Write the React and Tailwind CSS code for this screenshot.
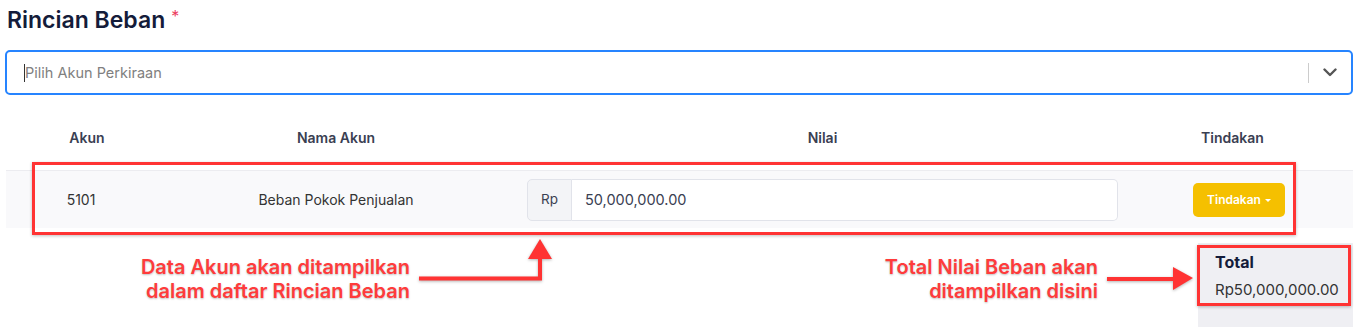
import React from "react";

const ChevronDown = () => (
  <svg width="14" height="9" viewBox="0 0 14 9" fill="none">
    <path d="M1.5 1.5 L7 7 L12.5 1.5" stroke="#555" strokeWidth="2.4" strokeLinecap="round" strokeLinejoin="round" />
  </svg>
);

const App = () => {
  return (
    <div className="relative h-[327px] w-[1359px] overflow-hidden bg-white font-['Inter','Noto_Sans',sans-serif]">
      <div className="pl-[7px] pt-[6px]">
        <h2 className="flex items-start text-[23px] font-semibold leading-[28px] text-[#141c3a]">
          Rincian Beban
          <span className="ml-[6px] mt-[-4px] text-[16px] font-normal text-[#ec3d5f]">*</span>
        </h2>
      </div>

      <div className="ml-[5px] mr-[6px] mt-[16px] flex h-[45px] items-center rounded-[5px] border-2 border-[#2684ff] bg-white">
        <div className="flex flex-1 items-center pl-[17px]">
          <span className="h-[18px] w-px bg-[#333]" />
          <span className="text-[14.5px] text-[#808080]">Pilih Akun Perkiraan</span>
        </div>
        <span className="h-[20px] w-px bg-[#ccc]" />
        <div className="flex w-[42px] items-center justify-center">
          <ChevronDown />
        </div>
      </div>

      <div className="ml-[6px] mr-[6px] mt-[10px]">
        <div className="grid h-[65px] grid-cols-[156px_348px_625px_1fr] items-center text-[14px] font-semibold text-[#3a4052]">
          <div className="text-center pl-[6px]">Akun</div>
          <div className="text-center">Nama Akun</div>
          <div className="text-center">Nilai</div>
          <div className="pl-[66px]">Tindakan</div>
        </div>
        <div className="grid h-[58px] grid-cols-[156px_348px_625px_1fr] items-center border-t border-[#ececf0] bg-[#f9f9fb] text-[14px] text-[#333]">
          <div className="pr-[6px] text-center">5101</div>
          <div className="text-center">Beban Pokok Penjualan</div>
          <div className="flex h-[42px] px-[17px]">
            <div className="flex w-[45px] items-center justify-center rounded-l-[5px] border border-[#e1e3ea] bg-[#f3f4f7] text-[13.5px] text-[#3a4052]">
              Rp
            </div>
            <div className="flex flex-1 items-center rounded-r-[5px] border border-l-0 border-[#e1e3ea] bg-white pl-[13px] text-[14.5px] text-[#3a4052]">
              50,000,000.00
            </div>
          </div>
          <div className="pl-[58px]">
            <button className="flex h-[34px] w-[92px] items-center justify-center gap-[4px] rounded-[5px] bg-[#f5c000] text-[12px] font-semibold text-white">
              Tindakan
              <span className="mt-[1px] h-0 w-0 border-x-[3px] border-t-[3px] border-x-transparent border-t-white" />
            </button>
          </div>
        </div>
        <div className="mt-[15px] flex justify-end">
          <div className="h-[90px] w-[155px] bg-[#efeff3] pl-[17px] pt-[9px]">
            <div className="text-[16px] font-bold leading-[20px] text-[#141c3a]">Total</div>
            <div className="mt-[8px] text-[15px] leading-[20px] text-[#333]">Rp50,000,000.00</div>
          </div>
        </div>
      </div>

      {/* annotation overlays */}
      <div className="absolute left-[32px] top-[162px] h-[73px] w-[1264px] border-[3px] border-[#ff3333] shadow-[0_1px_3px_rgba(0,0,0,0.25)]" />
      <div className="absolute left-[1197px] top-[245px] h-[61px] w-[154px] border-[3px] border-[#ff3333] shadow-[0_1px_3px_rgba(0,0,0,0.25)]" />

      <div className="absolute right-[949px] top-[255px] text-right text-[20px] font-semibold leading-[24px] text-[#ff3b3b] [text-shadow:0_1px_2px_rgba(0,0,0,0.25)]">
        Data Akun akan ditampilkan
        <br />
        dalam daftar Rincian Beban
      </div>
      <div className="absolute right-[261px] top-[255px] text-right text-[20px] font-semibold leading-[24px] text-[#ff3b3b] [text-shadow:0_1px_2px_rgba(0,0,0,0.25)]">
        Total Nilai Beban akan
        <br />
        ditampilkan disini
      </div>

      <svg className="absolute left-0 top-0" width="1359" height="327" style={{ filter: "drop-shadow(0 1px 1.5px rgba(0,0,0,0.3))" }}>
        <path d="M419 278.5 H540 V256" stroke="#ff3333" strokeWidth="4" fill="none" />
        <polygon points="528,259 540,239 552,259" fill="#ff3333" />
        <path d="M1107 279 H1176" stroke="#ff3333" strokeWidth="4" fill="none" />
        <polygon points="1173,267 1193,278 1173,290" fill="#ff3333" />
      </svg>
    </div>
  );
};

export default App;
